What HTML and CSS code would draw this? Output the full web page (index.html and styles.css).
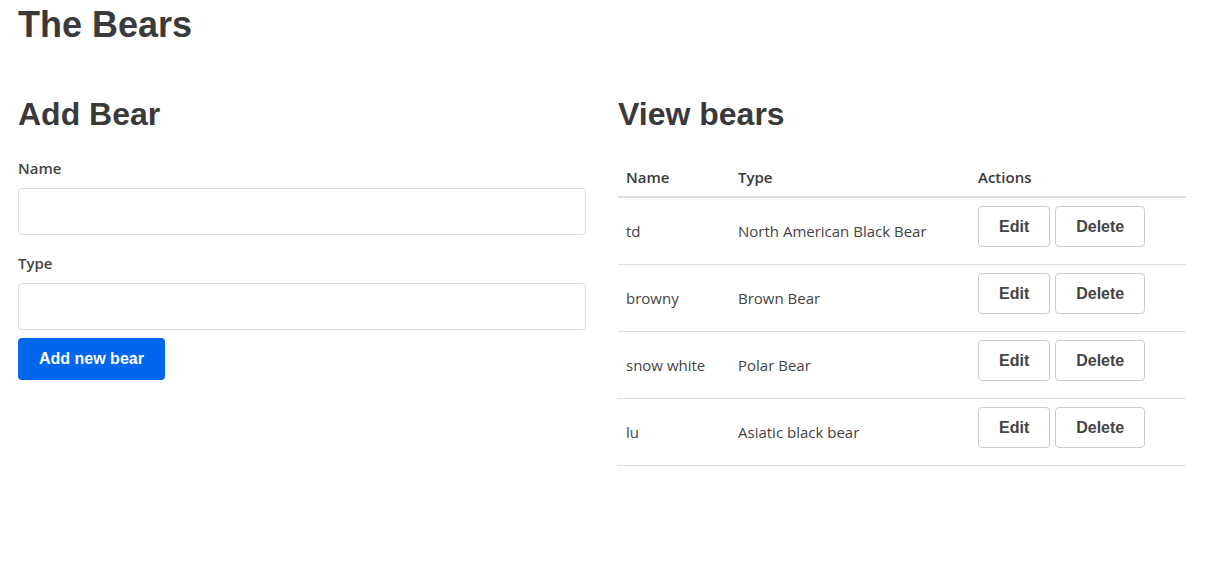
FILE: index.html
```html
<!DOCTYPE html>
<html lang="en">
<head>
<meta charset="utf-8">
<title>The Bears</title>
<link rel="stylesheet" href="styles.css">
</head>
<body>
<h1 class="title">The Bears</h1>
<main class="layout">
  <section class="col">
    <h2 class="heading">Add Bear</h2>
    <form class="form">
      <label class="label" for="name">Name</label>
      <input class="input" id="name" type="text">
      <label class="label label-type" for="type">Type</label>
      <input class="input" id="type" type="text">
      <button class="btn-primary" type="button">Add new bear</button>
    </form>
  </section>
  <section class="col">
    <h2 class="heading">View bears</h2>
    <table class="table">
      <thead>
        <tr><th class="c-name">Name</th><th class="c-type">Type</th><th class="c-act">Actions</th></tr>
      </thead>
      <tbody>
        <tr><td>td</td><td>North American Black Bear</td><td class="act"><div class="actions"><button class="btn" type="button">Edit</button><button class="btn" type="button">Delete</button></div></td></tr>
        <tr><td>browny</td><td>Brown Bear</td><td class="act"><div class="actions"><button class="btn" type="button">Edit</button><button class="btn" type="button">Delete</button></div></td></tr>
        <tr><td>snow white</td><td>Polar Bear</td><td class="act"><div class="actions"><button class="btn" type="button">Edit</button><button class="btn" type="button">Delete</button></div></td></tr>
        <tr><td>lu</td><td>Asiatic black bear</td><td class="act"><div class="actions"><button class="btn" type="button">Edit</button><button class="btn" type="button">Delete</button></div></td></tr>
      </tbody>
    </table>
  </section>
</main>
</body>
</html>
```

FILE: styles.css
```css
* { box-sizing: border-box; }
body {
  margin: 0;
  padding: 0 18px;
  font-family: "Open Sans", "Noto Sans", sans-serif;
  font-size: 15px;
  line-height: 22px;
  color: #444;
  background: #fff;
}
.title {
  margin: 4px 0 0;
  font-family: "Liberation Sans", Arial, sans-serif;
  font-size: 36px;
  line-height: 41px;
  font-weight: bold;
  color: #3a3a3a;
}
.layout {
  display: grid;
  grid-template-columns: 568px 568px;
  column-gap: 32px;
  margin-top: 51px;
}
.heading {
  margin: 0;
  font-family: "Liberation Sans", Arial, sans-serif;
  font-size: 32px;
  line-height: 37px;
  font-weight: bold;
  color: #3a3a3a;
}
.form {
  display: flex;
  flex-direction: column;
  align-items: flex-start;
  margin-top: 24px;
}
.label {
  font-weight: 600;
  color: #444;
  margin-bottom: 9px;
}
.label-type { margin-top: 17px; }
.input {
  width: 100%;
  height: 47px;
  border: 1px solid #ddd;
  border-radius: 4px;
  background: #fff;
  font: inherit;
}
.btn-primary {
  margin-top: 8px;
  height: 42px;
  padding: 0 21px;
  border: none;
  border-radius: 4px;
  background: #0066ee;
  color: #fff;
  font-family: "Liberation Sans", Arial, sans-serif;
  font-size: 16px;
  font-weight: bold;
}
.table {
  width: 100%;
  border-collapse: collapse;
  margin-top: 25px;
}
.table th {
  text-align: left;
  padding: 8px 8px;
  font-weight: 600;
  color: #3a3a3a;
  border-bottom: 2px solid #ddd;
}
.c-name { width: 112px; }
.c-type { width: 240px; }
.table td {
  padding: 8px 8px;
  vertical-align: middle;
  border-bottom: 1px solid #ddd;
  color: #444;
}
.actions {
  display: flex;
  gap: 5px;
  margin-bottom: 9px;
}
.btn {
  height: 41px;
  padding: 0 20px;
  border: 1px solid #ccc;
  border-radius: 4px;
  background: #fff;
  color: #444;
  font-family: "Liberation Sans", Arial, sans-serif;
  font-size: 16px;
  font-weight: bold;
}
```
